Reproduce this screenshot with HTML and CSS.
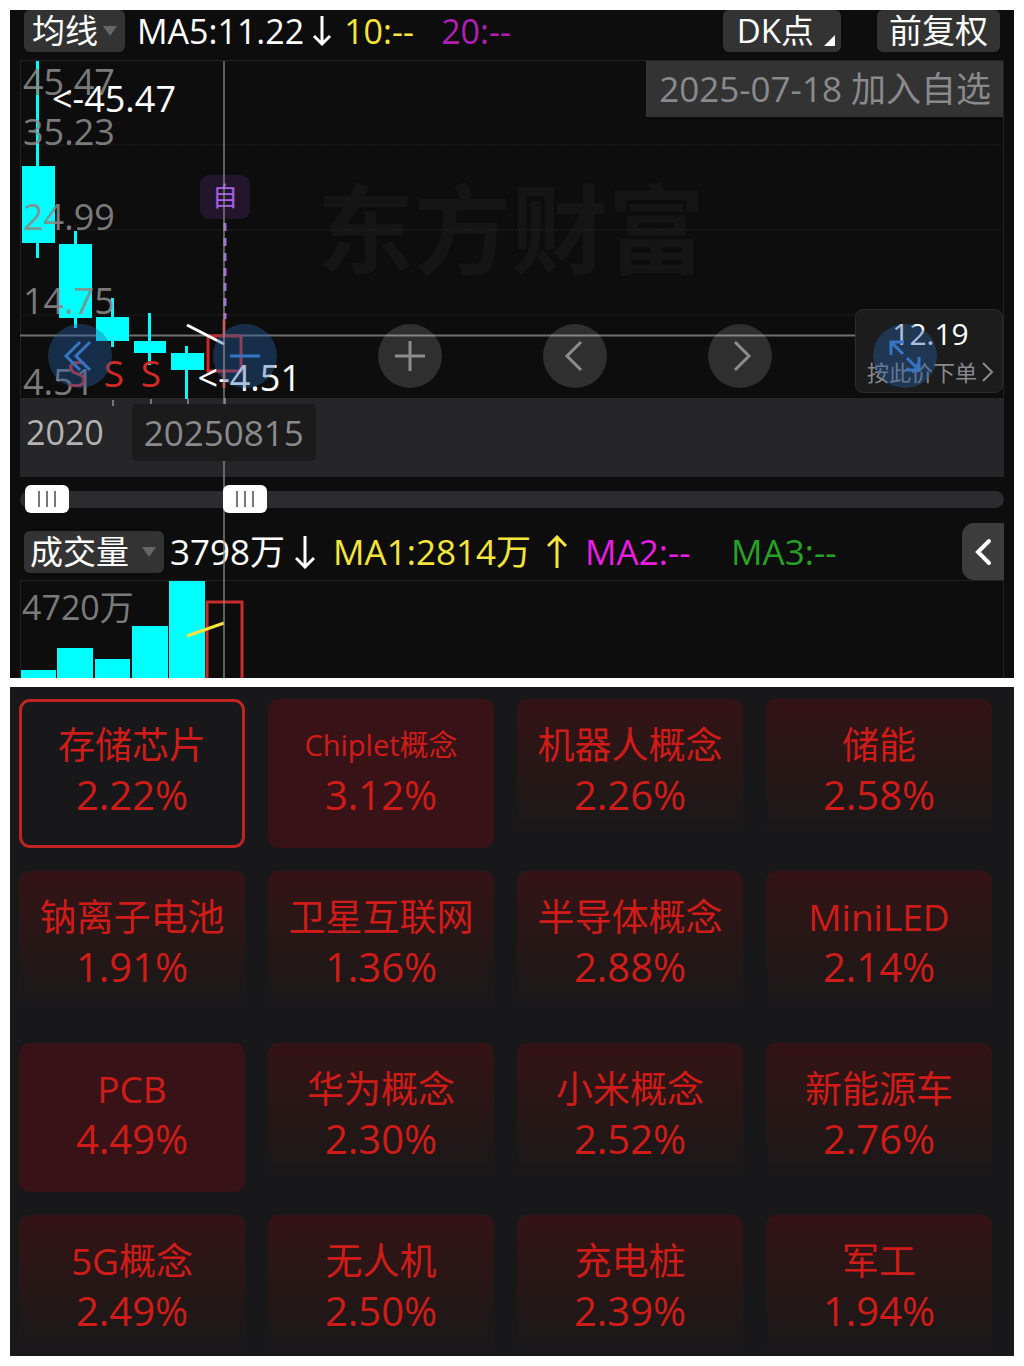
FILE: index.html
```html
<!DOCTYPE html>
<html lang="zh-CN">
  <head>
    <meta charset="UTF-8" />
    <meta name="viewport" content="width=device-width, initial-scale=1.0" />
    <title>东方财富</title>
    <link rel="stylesheet" href="styles.css">
  </head>
  <body>
    <section class="panel quote">
      <div class="toolbar">
        <button class="pill" type="button">均线<span class="caret"></span></button>
        <span class="ma white">MA5:11.22</span>
        <svg class="arrow white" width="20" height="34" viewBox="0 0 20 34"><path d="M10 2v28M2 22l8 8 8-8" /></svg>
        <span class="ma empty yellow">10:--</span>
        <span class="ma purple">20:--</span>
        <button class="pill dk" type="button">DK点<span class="corner"></span></button>
        <button class="pill adjust" type="button">前复权</button>
      </div>

      <div class="chart">
        <svg class="plot" width="100%" height="338">
          <text class="watermark" x="50%" y="206">东方财富</text>
          <g class="grid">
            <line x1="0" y1="85" x2="100%" y2="85" />
            <line x1="0" y1="170" x2="100%" y2="170" />
            <line x1="0" y1="255" x2="100%" y2="255" />
          </g>
          <line class="cross" x1="0" y1="275.5" x2="100%" y2="275.5" />

          <!-- candles -->
          <g class="down">
            <rect x="16" y="1" width="3" height="197" /><rect x="2" y="106" width="33" height="77" />
            <rect x="54" y="171" width="3" height="97" /><rect x="39" y="184" width="33" height="74" />
            <rect x="91" y="238" width="3" height="49" /><rect x="76" y="257" width="33" height="24" />
            <rect x="128" y="253" width="3" height="52" /><rect x="114" y="281" width="32" height="12" />
            <rect x="165" y="286" width="3" height="53" /><rect x="151" y="293" width="33" height="17" />
          </g>
          <g class="up">
            <path d="M204 259v16M204 312v16" />
            <rect x="188" y="276" width="33" height="35" />
          </g>
          <path class="ticks" d="M93 340v6M131 339v5M168 339v5M205 338v6" />

          <g class="scale">
            <text x="3" y="35">45.47</text>
            <text x="3" y="85">35.23</text>
            <text x="3" y="170">24.99</text>
            <text x="3" y="254">14.75</text>
            <text x="3" y="335">4.51</text>
          </g>

          <path class="ma-line" d="M167 265l37 19" />
          <line class="mark-line" x1="205" y1="163" x2="205" y2="259" />
          <rect class="mark-bg" x="180" y="115" width="50" height="44" rx="9" />
          <text class="mark-text" x="205" y="146">自</text>

          <g class="sell">
            <text x="57" y="327">S</text>
            <text x="94" y="327">S</text>
            <text x="131" y="327">S</text>
          </g>
          <g class="peak">
            <text x="156" y="52">&lt;-45.47</text>
            <text x="281" y="331">&lt;-4.51</text>
          </g>
        </svg>

        <div class="added">2025-07-18 加入自选</div>

        <button class="order" type="button">
          <span class="order-price">12.19</span>
          <span class="order-tip">按此价下单<svg width="12" height="20" viewBox="0 0 12 20"><path d="M1 1l9 9-9 9" /></svg></span>
        </button>

        <div class="controls">
          <button class="round blue" type="button" aria-label="最早">
            <svg viewBox="0 0 64 64"><path d="M32 18L18 32l14 14M42 18L28 32l14 14" /></svg>
          </button>
          <button class="round blue" type="button" aria-label="缩小">
            <svg viewBox="0 0 64 64"><path d="M17 32h30" /></svg>
          </button>
          <button class="round" type="button" aria-label="放大">
            <svg viewBox="0 0 64 64"><path d="M17 32h30M32 17v30" /></svg>
          </button>
          <button class="round" type="button" aria-label="左移">
            <svg viewBox="0 0 64 64"><path d="M38 18L24 32l14 14" /></svg>
          </button>
          <button class="round" type="button" aria-label="右移">
            <svg viewBox="0 0 64 64"><path d="M27 18l14 14-14 14" /></svg>
          </button>
          <button class="round blue" type="button" aria-label="全屏">
            <svg viewBox="0 0 64 64"><path d="M18 31V18h13M18 18l12 12M34 34l12 12M46 33v13H33" /></svg>
          </button>
        </div>
      </div>

      <div class="axis">
        <span class="year">2020</span>
        <span class="date">20250815</span>
      </div>

      <div class="range">
        <input type="range" min="0" max="1000" value="5" aria-label="开始">
        <input type="range" min="0" max="1000" value="216" aria-label="结束">
      </div>

      <div class="toolbar volume-bar">
        <button class="pill vol" type="button">成交量<span class="caret"></span></button>
        <span class="ma white">3798万</span>
        <svg class="arrow white" width="20" height="34" viewBox="0 0 20 34"><path d="M10 1v31M1 23l9 9 9-9" /></svg>
        <span class="ma total yellow">MA1:2814万</span>
        <svg class="arrow yellow" width="20" height="34" viewBox="0 0 20 34"><path d="M10 33V2M1 11l9-9 9 9" /></svg>
        <span class="ma wide magenta">MA2:--</span>
        <span class="ma wide green">MA3:--</span>
        <button class="fold" type="button" aria-label="展开">
          <svg width="18" height="28" viewBox="0 0 18 28"><path d="M15 3L4 14l11 11" /></svg>
        </button>
      </div>

      <div class="volume">
        <svg class="plot" width="100%" height="98">
          <g class="down">
            <rect x="1" y="90" width="35" height="8" />
            <rect x="37" y="68" width="36" height="30" />
            <rect x="75" y="79" width="35" height="19" />
            <rect x="112" y="46" width="36" height="52" />
            <rect x="149" y="1" width="36" height="97" />
          </g>
          <g class="up"><path d="M187 98V22h35v76" /></g>
          <path class="vol-line" d="M167 56l37-13" />
          <g class="scale"><text class="vol-max" x="2" y="40">4720万</text></g>
        </svg>
      </div>

      <div class="cross-v"></div>
    </section>

    <section class="panel boards">
      <button class="tile active" type="button"><span class="name">存储芯片</span><span class="pct">2.22%</span></button>
      <button class="tile strong" type="button"><span class="name small">Chiplet概念</span><span class="pct">3.12%</span></button>
      <button class="tile" type="button"><span class="name">机器人概念</span><span class="pct">2.26%</span></button>
      <button class="tile" type="button"><span class="name">储能</span><span class="pct">2.58%</span></button>
      <button class="tile" type="button"><span class="name">钠离子电池</span><span class="pct">1.91%</span></button>
      <button class="tile" type="button"><span class="name">卫星互联网</span><span class="pct">1.36%</span></button>
      <button class="tile" type="button"><span class="name">半导体概念</span><span class="pct">2.88%</span></button>
      <button class="tile" type="button"><span class="name">MiniLED</span><span class="pct">2.14%</span></button>
      <button class="tile strong" type="button"><span class="name">PCB</span><span class="pct">4.49%</span></button>
      <button class="tile" type="button"><span class="name">华为概念</span><span class="pct">2.30%</span></button>
      <button class="tile" type="button"><span class="name">小米概念</span><span class="pct">2.52%</span></button>
      <button class="tile" type="button"><span class="name">新能源车</span><span class="pct">2.76%</span></button>
      <button class="tile" type="button"><span class="name">5G概念</span><span class="pct">2.49%</span></button>
      <button class="tile" type="button"><span class="name">无人机</span><span class="pct">2.50%</span></button>
      <button class="tile" type="button"><span class="name">充电桩</span><span class="pct">2.39%</span></button>
      <button class="tile" type="button"><span class="name">军工</span><span class="pct">1.94%</span></button>
    </section>
  </body>
</html>
```
FILE: styles.css
```css
* {
  margin: 0;
  padding: 0;
  box-sizing: border-box;
}
body {
  display: flex;
  flex-direction: column;
  gap: 9px;
  height: 100vh;
  padding: 10px;
  background-color: #fff;
  font-family: "Open Sans", "Noto Sans CJK SC", sans-serif;
}
button {
  border: none;
  font-family: inherit;
  cursor: pointer;
}
svg {
  fill: none;
  flex: none;
}

/* quote panel */
.quote {
  position: relative;
  flex: none;
  padding: 0 10px;
  background-color: #0d0d0d;
}
.toolbar {
  display: flex;
  align-items: center;
  height: 50px;
  padding: 0 4px 8px;
}
.pill {
  display: flex;
  align-items: center;
  height: 42px;
  padding: 0 8px;
  border-radius: 6px;
  background-color: #333;
  color: #fff;
  font-size: 33px;
  line-height: 42px;
  white-space: nowrap;
}
.caret {
  margin-left: 5px;
  border: 7px solid transparent;
  border-top: 10px solid #666;
  border-bottom: 0;
}
.corner {
  align-self: flex-end;
  margin: 0 0 6px 10px;
  border-left: 11px solid transparent;
  border-bottom: 11px solid #fff;
}
.dk {
  margin-left: auto;
  padding: 0 6px 0 14px;
}
.adjust {
  margin-left: 36px;
  padding: 0 12px;
}
.ma {
  margin-left: 12px;
  font-size: 34px;
  line-height: 42px;
  white-space: nowrap;
}
.empty {
  min-width: 85px;
}
.arrow {
  margin-left: 8px;
  stroke: currentColor;
  stroke-width: 3;
}
.white {
  color: #fff;
}
.yellow {
  color: #f6e53c;
}
.purple {
  color: #b020b0;
}
.magenta {
  color: #e81ee0;
}
.green {
  color: #28a028;
}

.chart {
  position: relative;
  height: 338px;
  border: 1px solid #222;
  border-bottom: 0;
}
.plot {
  display: block;
  overflow: visible;
  margin: -1px;
}
.watermark {
  fill: #151515;
  font-size: 97px;
  font-weight: 700;
  text-anchor: middle;
}
.grid line {
  stroke: #232323;
  stroke-dasharray: 2 1;
}
.cross {
  stroke: #707070;
  stroke-width: 2;
}
.down {
  fill: #0ff;
}
.up {
  stroke: #c92a2a;
  stroke-width: 3;
}
.ticks {
  stroke: #777;
  stroke-width: 2;
}
.scale text {
  fill: #8a8a8a;
  fill-opacity: 0.9;
  font-size: 36px;
}
.scale .vol-max {
  font-size: 34px;
}
.ma-line {
  stroke: #fff;
  stroke-width: 3;
}
.vol-line {
  stroke: #f6e53c;
  stroke-width: 3;
}
.mark-line {
  stroke: #a56be0;
  stroke-width: 3;
  stroke-dasharray: 8 7;
}
.mark-bg {
  fill: #22152c;
}
.mark-text {
  fill: #a860e8;
  font-size: 26px;
  text-anchor: middle;
}
.sell text {
  fill: #d42a26;
  font-size: 37px;
  font-weight: 500;
  text-anchor: middle;
}
.peak text {
  fill: #fff;
  font-size: 36px;
  text-anchor: end;
}
.added {
  position: absolute;
  top: 0;
  right: 0;
  padding: 0 12px 0 13px;
  background-color: #333;
  color: #8a8a8e;
  font-size: 35px;
  line-height: 56px;
}
.order {
  position: absolute;
  right: 0;
  bottom: 5px;
  display: flex;
  flex-direction: column;
  align-items: center;
  padding: 4px 8px 0 11px;
  height: 84px;
  border: 1px solid #2c2c2c;
  border-radius: 8px;
  background-color: #1c1c1c;
}
.order-price {
  color: #fff;
  font-size: 30px;
  line-height: 40px;
}
.order-tip {
  display: flex;
  align-items: center;
  gap: 5px;
  color: #8a8a8e;
  font-size: 22px;
  line-height: 36px;
}
.order-tip svg {
  stroke: #8a8a8e;
  stroke-width: 2;
}
.controls {
  position: absolute;
  left: 27px;
  right: 66px;
  bottom: 10px;
  display: flex;
  justify-content: space-between;
}
.round {
  width: 64px;
  height: 64px;
  border-radius: 50%;
  background-color: rgba(255, 255, 255, 0.14);
}
.round svg {
  display: block;
  stroke: #8c8c8c;
  stroke-width: 3;
}
.blue {
  background-color: rgba(41, 98, 168, 0.4);
}
.blue svg {
  stroke: #3575c4;
}

.axis {
  display: flex;
  align-items: flex-start;
  height: 79px;
  padding: 6px;
  background-color: #262628;
}
.year {
  margin-right: 28px;
  color: #b4b4b4;
  font-size: 34px;
  line-height: 56px;
}
.date {
  z-index: 2;
  padding: 0 12px;
  border-radius: 5px;
  background-color: #1b1b1b;
  color: #8a8a8e;
  font-size: 35px;
  line-height: 57px;
}

/* two thumbs on one track */
.range {
  position: relative;
  z-index: 2;
  height: 46px;
  padding-top: 14px;
}
.range::before {
  content: "";
  display: block;
  height: 17px;
  border-radius: 9px;
  background-color: #2c2c2e;
}
.range input {
  position: absolute;
  left: 0;
  top: 8px;
  width: 100%;
  height: 28px;
  background: none;
  appearance: none;
  -webkit-appearance: none;
  pointer-events: none;
}
.range input::-webkit-slider-thumb {
  -webkit-appearance: none;
  width: 44px;
  height: 28px;
  border-radius: 6px;
  background:
    linear-gradient(90deg, #777 2px, transparent 2px 8px, #777 8px 10px, transparent 10px 16px, #777 16px) center / 18px 16px no-repeat,
    #fff;
  pointer-events: auto;
}

.volume-bar {
  height: 57px;
  padding: 0 0 0 4px;
}
.volume-bar .ma {
  margin-left: 18px;
  font-size: 35px;
}
.volume-bar .pill + .ma {
  margin-left: 6px;
}
.volume-bar .arrow {
  margin-left: 10px;
}
.volume-bar .total {
  min-width: 204px;
}
.volume-bar .wide {
  min-width: 128px;
}
.vol {
  padding: 0 8px 0 6px;
}
.vol .caret {
  margin-left: 13px;
}
.fold {
  display: flex;
  align-items: center;
  justify-content: center;
  width: 42px;
  height: 57px;
  margin-left: auto;
  border-radius: 12px 0 0 12px;
  background-color: #3c3c3c;
}
.fold svg {
  stroke: #fff;
  stroke-width: 4;
  stroke-linecap: round;
}
.volume {
  height: 98px;
  border: 1px solid #222;
  border-bottom: 0;
}
.cross-v {
  position: absolute;
  top: 51px;
  bottom: 0;
  left: 213px;
  width: 2px;
  background-color: rgba(150, 150, 150, 0.6);
  pointer-events: none;
}

/* concept boards */
.boards {
  flex: 1;
  min-height: 0;
  display: grid;
  grid-template-columns: repeat(4, 1fr);
  grid-auto-rows: 149px;
  gap: 23px;
  padding: 12px 22px 0 9px;
  overflow: hidden;
  background-color: #18181a;
}
.tile {
  display: flex;
  flex-direction: column;
  align-items: center;
  padding-top: 20px;
  border-radius: 11px;
  background: linear-gradient(#351316, #261716 50%, #18181a 94%);
  color: #d01c18;
  white-space: nowrap;
}
.active {
  padding-top: 17px;
  border: 3px solid #c02420;
  background: none;
}
.strong {
  background: #371318;
}
.name {
  font-size: 37px;
  line-height: 51px;
}
.small {
  font-size: 29px;
}
.pct {
  font-size: 40px;
  line-height: 50px;
}
```
